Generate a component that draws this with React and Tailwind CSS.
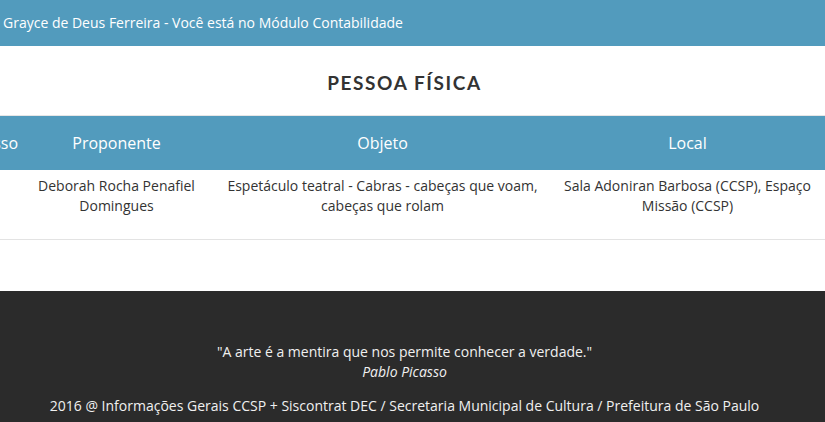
export default function App() {
  const font = { fontFamily: '"Open Sans", "Liberation Sans", sans-serif' };
  return (
    <div className="w-[825px] h-[422px] overflow-hidden bg-white flex flex-col" style={font}>
      <div className="h-[46px] bg-[#529bbd] flex items-center pl-[3px] shrink-0">
        <span className="text-white text-[14px] leading-none">Grayce de Deus Ferreira - Você está no Módulo Contabilidade</span>
      </div>
      <div className="h-[69px] flex items-center justify-center shrink-0 pr-[16px] pt-[6px]">
        <h1 className="text-[19px] font-bold text-[#333] tracking-[1.6px]" style={{ fontFamily: 'Lato, "Open Sans", sans-serif' }}>PESSOA FÍSICA</h1>
      </div>
      <div className="border-t border-[#e6e6e6] shrink-0">
        <div className="flex h-[54px] bg-[#529bbd] text-white text-[16px] items-center">
          <div className="w-[18px] flex justify-end overflow-hidden whitespace-nowrap">Processo</div>
          <div className="w-[197px] text-center">Proponente</div>
          <div className="w-[335px] text-center">Objeto</div>
          <div className="w-[275px] text-center">Local</div>
        </div>
        <div className="flex h-[70px] text-[14px] leading-[20px] text-[#333] border-b border-[#e3e3e3] pt-[6px]">
          <div className="w-[18px]"></div>
          <div className="w-[197px] text-center px-[14px]">Deborah Rocha Penafiel Domingues</div>
          <div className="w-[335px] text-center px-[8px]">Espetáculo teatral - Cabras - cabeças que voam, cabeças que rolam</div>
          <div className="w-[275px] text-center px-[8px]">Sala Adoniran Barbosa (CCSP), Espaço Missão (CCSP)</div>
        </div>
      </div>
      <div className="h-[51px] shrink-0"></div>
      <div className="flex-1 bg-[#2b2b2b] text-[#f0f0f0] text-[14px] flex flex-col items-center pt-[51px] pr-[16px]">
        <p className="leading-[20px]">"A arte é a mentira que nos permite conhecer a verdade."</p>
        <p className="leading-[20px] italic">Pablo Picasso</p>
        <p className="leading-[20px] mt-[14px]">2016 @ Informações Gerais CCSP + Siscontrat DEC / Secretaria Municipal de Cultura / Prefeitura de São Paulo</p>
      </div>
    </div>
  );
}
